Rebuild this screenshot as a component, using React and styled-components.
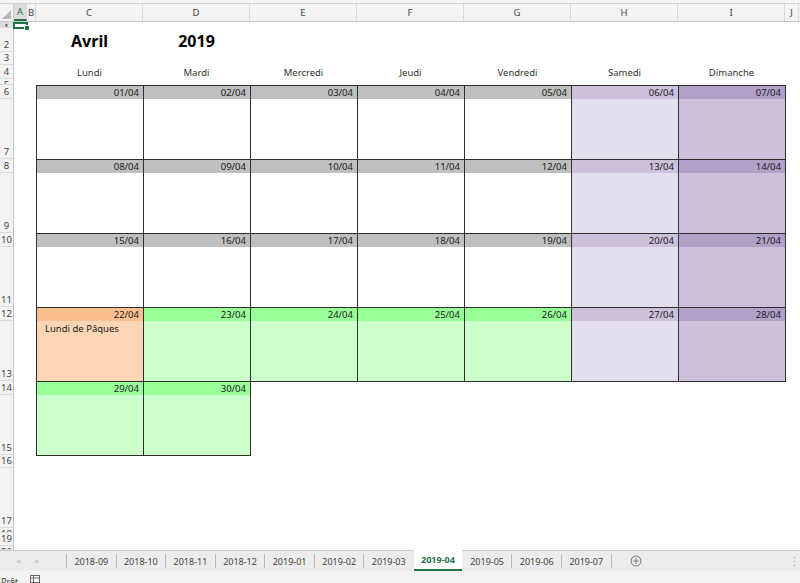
import React from 'react';
import styled, { createGlobalStyle, css } from 'styled-components';

const GlobalStyle = createGlobalStyle`
  html, body {
    margin: 0;
    padding: 0;
    background: #fff;
  }
  body {
    font-family: "Noto Sans", "Liberation Sans", sans-serif;
  }
`;

const GREEN = '#217346';

const Window = styled.div`
  width: 800px;
  height: 583px;
  display: flex;
  flex-direction: column;
  overflow: hidden;
  background: #fff;
`;

const TopStrip = styled.div`
  height: 3px;
  flex: none;
  background: #f3f3f3;
  border-bottom: 1px solid #d6d6d6;
`;

const ColumnHeaders = styled.div`
  height: 18px;
  flex: none;
  display: flex;
  background: #f3f3f3;
  border-bottom: 1px solid #c6c6c6;
  box-sizing: border-box;
`;

const Corner = styled.div`
  width: 14px;
  flex: none;
  border-right: 1px solid #c6c6c6;
  box-sizing: border-box;
  display: flex;
  align-items: flex-end;
  justify-content: flex-end;
  padding: 0 2px 2px 0;
`;

const ColHead = styled.div`
  width: ${(p) => p.$w}px;
  flex: none;
  box-sizing: border-box;
  border-right: 1px solid #d8d8d8;
  font-size: 9.5px;
  color: #444;
  display: flex;
  align-items: center;
  justify-content: center;
  overflow: hidden;
  ${(p) =>
    p.$active &&
    css`
      background: #dcdcdc;
      color: ${GREEN};
      border-bottom: 2px solid ${GREEN};
    `}
`;

const SheetBody = styled.div`
  height: 528px;
  flex: none;
  display: flex;
  position: relative;
  overflow: hidden;
`;

const RowHeaders = styled.div`
  width: 14px;
  flex: none;
  display: flex;
  flex-direction: column;
  background: #f3f3f3;
  border-right: 1px solid #c6c6c6;
  box-sizing: border-box;
`;

const RowHead = styled.div`
  height: ${(p) => p.$h}px;
  flex: none;
  box-sizing: border-box;
  border-bottom: 1px solid #dadada;
  font-size: 9.5px;
  line-height: 12px;
  color: #444;
  display: flex;
  align-items: ${(p) => (p.$h < 8 ? 'flex-start' : 'flex-end')};
  justify-content: center;
  overflow: hidden;
  ${(p) =>
    p.$active &&
    css`
      background: #dcdcdc;
    `}
`;

const Canvas = styled.div`
  flex: 1;
  padding-left: 22px;
  display: flex;
  flex-direction: column;
`;

const Spacer = styled.div`
  height: ${(p) => p.$h}px;
  flex: none;
`;

const SevenCols = styled.div`
  display: grid;
  grid-template-columns: repeat(7, 107px);
  height: ${(p) => p.$h}px;
  flex: none;
`;

const Title = styled.div`
  font-size: 16px;
  font-weight: 700;
  color: #000;
  display: flex;
  align-items: flex-end;
  justify-content: center;
  line-height: 20px;
  padding-bottom: 1px;
`;

const DayName = styled.div`
  font-size: 9.5px;
  color: #333;
  display: flex;
  align-items: flex-end;
  justify-content: center;
  line-height: 13px;
`;

const Calendar = styled.div`
  display: grid;
  grid-template-columns: repeat(7, 107px);
  grid-auto-rows: 74px;
  flex: none;
`;

const Cell = styled.div`
  border: 1px solid #2e2e2e;
  margin: 0 -1px -1px 0;
  background: ${(p) => p.$body};
  display: flex;
  flex-direction: column;
  min-width: 0;
`;

const DateBar = styled.div`
  height: 13px;
  background: ${(p) => p.$head};
  font-size: 9.5px;
  line-height: 13px;
  color: #1a1a1a;
  text-align: right;
  padding-right: 4px;
`;

const Note = styled.div`
  font-size: 9.5px;
  line-height: 14px;
  color: #1a1a1a;
  padding: 1px 0 0 8px;
`;

const Selection = styled.div`
  position: absolute;
  left: 13px;
  top: 0;
  width: 15px;
  height: 7px;
  box-sizing: border-box;
  border: 2px solid ${GREEN};

  &::after {
    content: '';
    position: absolute;
    right: -4px;
    bottom: -4px;
    width: 4px;
    height: 4px;
    background: ${GREEN};
    border: 1px solid #fff;
  }
`;

const TabBar = styled.div`
  height: 21px;
  flex: none;
  display: flex;
  align-items: stretch;
  background: #ececec;
  border-top: 1px solid #c8c8c8;
  box-sizing: border-box;
`;

const Nav = styled.div`
  width: 66px;
  flex: none;
  display: flex;
  align-items: center;
  gap: 14px;
  padding-left: 16px;
  box-sizing: border-box;
  color: #cacaca;
  font-size: 6px;
`;

const Sep = styled.div`
  width: 1px;
  height: 14px;
  align-self: center;
  background: ${(p) => (p.$hidden ? 'transparent' : '#b9b9b9')};
  flex: none;
`;

const Tab = styled.div`
  padding: 0 7.4px;
  display: flex;
  align-items: center;
  font-size: 9px;
  color: #444;
  white-space: nowrap;
  box-sizing: border-box;
  ${(p) =>
    p.$active &&
    css`
      background: #fff;
      color: ${GREEN};
      font-weight: 700;
      padding: 0 7px;
      border-bottom: 2px solid ${GREEN};
      margin-top: -1px;
    `}
`;

const AddSheet = styled.div`
  margin-left: 18px;
  display: flex;
  align-items: center;
`;

const Grip = styled.div`
  margin-left: auto;
  margin-right: 4px;
  display: flex;
  align-items: center;
`;

const StatusBar = styled.div`
  height: 22px;
  flex: none;
  background: #f3f3f3;
  display: flex;
  align-items: flex-start;
  gap: 12px;
  padding: 4px 0 0 1px;
  box-sizing: border-box;
  font-size: 9px;
  color: #444;
`;

const COLUMNS = [
  { label: 'A', w: 13, active: true },
  { label: 'B', w: 9 },
  { label: 'C', w: 107 },
  { label: 'D', w: 107 },
  { label: 'E', w: 107 },
  { label: 'F', w: 107 },
  { label: 'G', w: 107 },
  { label: 'H', w: 107 },
  { label: 'I', w: 107 },
  { label: 'J', w: 14 },
];

const ROWS = [
  [1, 6], [2, 24], [3, 13], [4, 14], [5, 6],
  [6, 14], [7, 60], [8, 14], [9, 60], [10, 14], [11, 60],
  [12, 14], [13, 60], [14, 14], [15, 60], [16, 13], [17, 60],
  [18, 5], [19, 13], [20, 4],
];

const DAYS = ['Lundi', 'Mardi', 'Mercredi', 'Jeudi', 'Vendredi', 'Samedi', 'Dimanche'];

const COLORS = {
  week: { head: '#bfbfbf', body: '#ffffff' },
  sat: { head: '#ccc0da', body: '#e4dfec' },
  sun: { head: '#b1a0c7', body: '#ccc0da' },
  holiday: { head: '#fabf8f', body: '#fcd5b4' },
  vacation: { head: '#99ff99', body: '#ccffcc' },
};

const pad = (n) => String(n).padStart(2, '0');

const kindOf = (day) => {
  const dow = (day - 1) % 7;
  if (dow === 6) return 'sun';
  if (dow === 5) return 'sat';
  if (day === 22) return 'holiday';
  if (day >= 23) return 'vacation';
  return 'week';
};

const NOTES = { 22: 'Lundi de Pâques' };

const TABS = [
  '2018-09', '2018-10', '2018-11', '2018-12', '2019-01', '2019-02',
  '2019-03', '2019-04', '2019-05', '2019-06', '2019-07',
];
const ACTIVE_TAB = '2019-04';

const CornerTriangle = () => (
  <svg width="9" height="9" viewBox="0 0 9 9">
    <polygon points="9,0 9,9 0,9" fill="#b8b8b8" />
  </svg>
);

const PlusCircle = () => (
  <svg width="12" height="12" viewBox="0 0 12 12">
    <circle cx="6" cy="6" r="5" fill="none" stroke="#777" strokeWidth="1" />
    <path d="M6 3.3v5.4M3.3 6h5.4" stroke="#777" strokeWidth="1" />
  </svg>
);

const Dots = () => (
  <svg width="3" height="11" viewBox="0 0 3 11">
    <circle cx="1.5" cy="1.5" r="0.8" fill="#aaa" />
    <circle cx="1.5" cy="5.5" r="0.8" fill="#aaa" />
    <circle cx="1.5" cy="9.5" r="0.8" fill="#aaa" />
  </svg>
);

const MacroIcon = () => (
  <svg width="10" height="8" viewBox="0 0 10 8">
    <rect x="0.5" y="0.5" width="9" height="7" fill="#fff" stroke="#666" />
    <path d="M0.5 3h9M3.5 0.5v7" stroke="#666" />
  </svg>
);

export default function App() {
  const days = Array.from({ length: 30 }, (_, i) => i + 1);

  return (
    <Window>
      <GlobalStyle />
      <TopStrip />
      <ColumnHeaders>
        <Corner>
          <CornerTriangle />
        </Corner>
        {COLUMNS.map((c) => (
          <ColHead key={c.label} $w={c.w} $active={c.active}>
            {c.label}
          </ColHead>
        ))}
      </ColumnHeaders>

      <SheetBody>
        <RowHeaders>
          {ROWS.map(([n, h]) => (
            <RowHead key={n} $h={h} $active={n === 1}>
              {n}
            </RowHead>
          ))}
        </RowHeaders>

        <Canvas>
          <Spacer $h={6} />
          <SevenCols $h={24}>
            <Title>Avril</Title>
            <Title>2019</Title>
          </SevenCols>
          <Spacer $h={13} />
          <SevenCols $h={14}>
            {DAYS.map((d) => (
              <DayName key={d}>{d}</DayName>
            ))}
          </SevenCols>
          <Spacer $h={6} />
          <Calendar>
            {days.map((day) => {
              const c = COLORS[kindOf(day)];
              return (
                <Cell key={day} $body={c.body}>
                  <DateBar $head={c.head}>{`${pad(day)}/04`}</DateBar>
                  {NOTES[day] && <Note>{NOTES[day]}</Note>}
                </Cell>
              );
            })}
          </Calendar>
        </Canvas>

        <Selection />
      </SheetBody>

      <TabBar>
        <Nav>
          <span>◀</span>
          <span>▶</span>
        </Nav>
        {TABS.map((t, i) => {
          const active = t === ACTIVE_TAB;
          const prevActive = TABS[i - 1] === ACTIVE_TAB;
          return (
            <React.Fragment key={t}>
              <Sep $hidden={active || prevActive} />
              <Tab $active={active}>{t}</Tab>
            </React.Fragment>
          );
        })}
        <Sep />
        <AddSheet>
          <PlusCircle />
        </AddSheet>
        <Grip>
          <Dots />
        </Grip>
      </TabBar>

      <StatusBar>
        <span>Prêt</span>
        <MacroIcon />
      </StatusBar>
    </Window>
  );
}
